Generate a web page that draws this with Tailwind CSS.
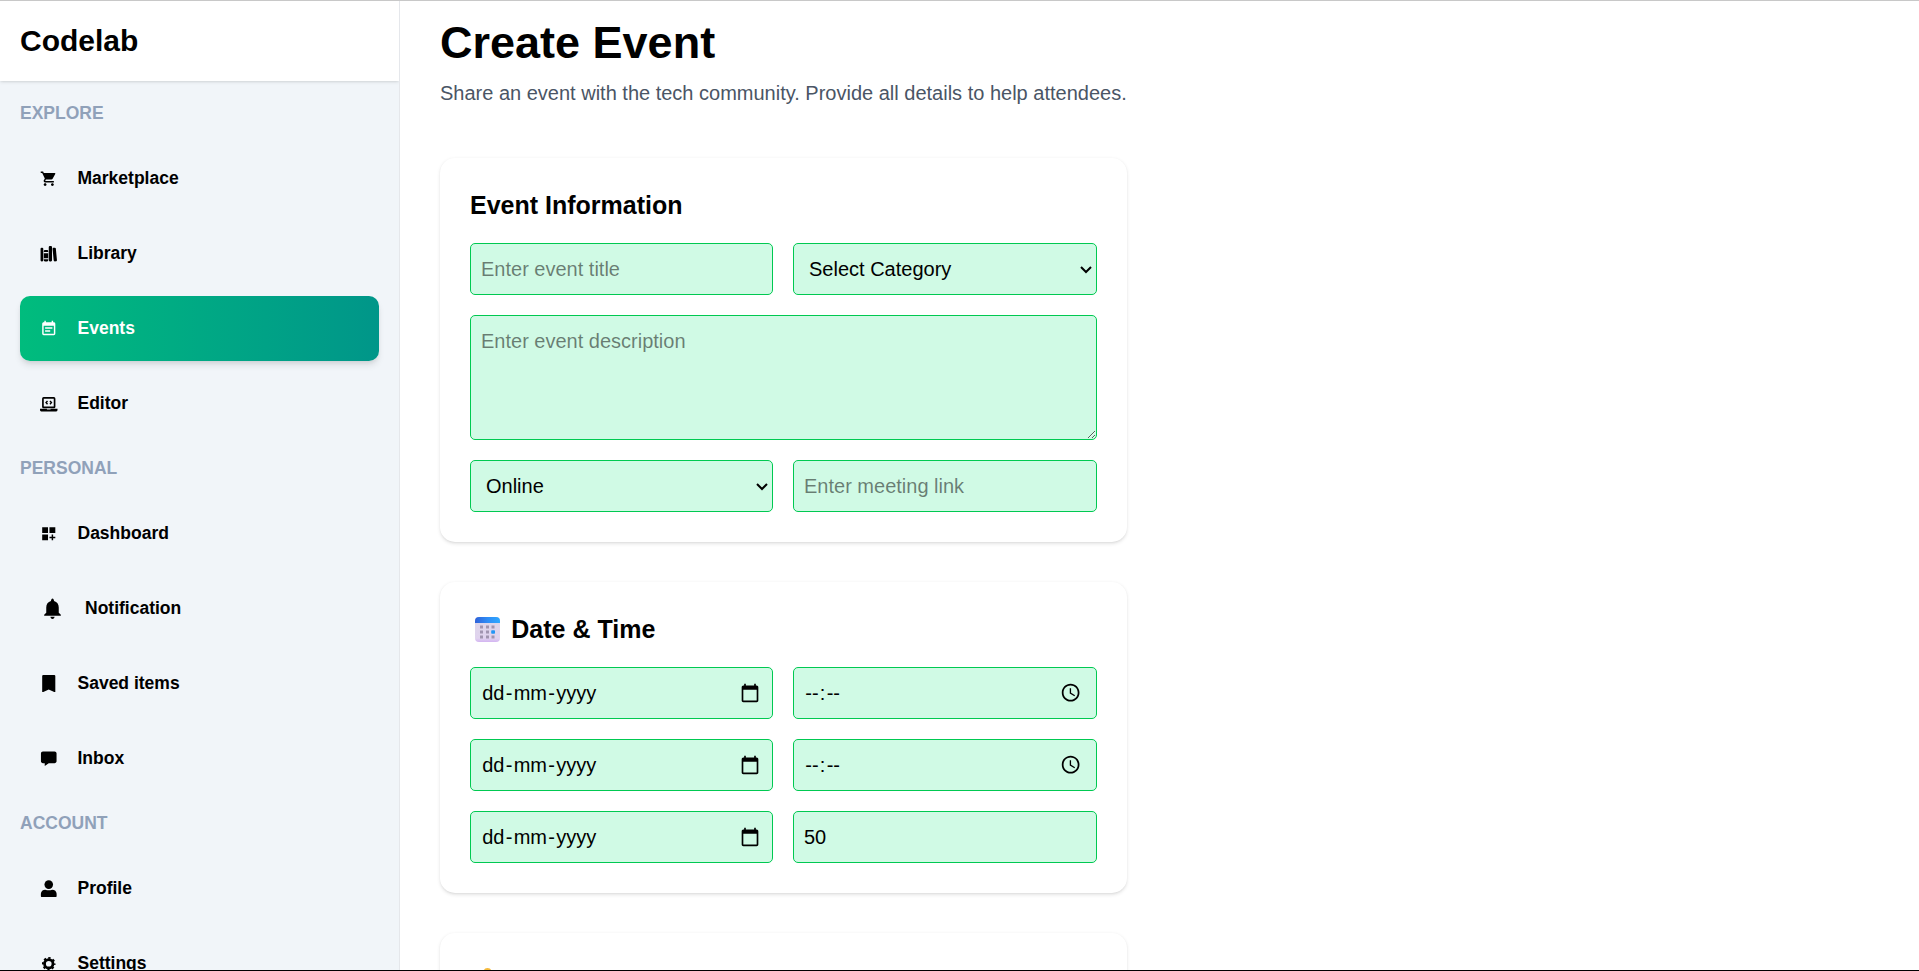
<!DOCTYPE html>
<html lang="en">
<head>
<meta charset="utf-8">
<title>Codelab - Create Event</title>
<script src="https://cdn.jsdelivr.net/npm/@tailwindcss/browser@4"></script>
</head>
<body class="h-screen flex flex-col overflow-hidden bg-white text-black border-t border-b border-t-[#c8c8c8] border-b-black font-['Liberation_Sans',Arial,sans-serif]">
<div class="flex flex-1 min-h-0 overflow-hidden [zoom:1.25]">

  <aside class="w-80 shrink-0 bg-slate-100 border-r border-gray-200 overflow-hidden">
    <div class="h-16 bg-white shadow-sm px-4 flex items-center">
      <div class="text-2xl font-bold">Codelab</div>
    </div>
    <nav class="p-4 flex flex-col gap-4 text-sm font-bold">
      <div class="text-slate-400">EXPLORE</div>
      <div class="flex flex-col gap-2">
        <a class="flex items-center gap-4 p-4 rounded-lg">
          <svg class="size-3.5" viewBox="0 0 24 24" fill="currentColor"><path d="M7 18c-1.1 0-1.99.9-1.99 2S5.9 22 7 22s2-.9 2-2-.9-2-2-2zM1 2v2h2l3.6 7.59-1.35 2.45c-.16.28-.25.61-.25.96 0 1.1.9 2 2 2h12v-2H7.42c-.14 0-.25-.11-.25-.25l.03-.12.9-1.63h7.45c.75 0 1.41-.41 1.75-1.03l3.58-6.49A1.003 1.003 0 0020 4H5.21l-.94-2H1zm16 16c-1.1 0-1.99.9-1.99 2s.89 2 1.99 2 2-.9 2-2-.9-2-2-2z"/></svg>
          Marketplace
        </a>
        <a class="flex items-center gap-4 p-4 rounded-lg">
          <svg class="size-3.5" viewBox="0 0 512 512" fill="currentColor"><path d="M64 480H48a32 32 0 01-32-32V112a32 32 0 0132-32h16a32 32 0 0132 32v336a32 32 0 01-32 32zM240 176a32 32 0 00-32-32h-64a32 32 0 00-32 32v28a4 4 0 004 4h120a4 4 0 004-4zM112 448a32 32 0 0032 32h64a32 32 0 0032-32v-30a2 2 0 00-2-2H114a2 2 0 00-2 2z"/><rect x="112" y="240" width="128" height="144" rx="2"/><path d="M320 480h-32a32 32 0 01-32-32V64a32 32 0 0132-32h32a32 32 0 0132 32v384a32 32 0 01-32 32zM495.89 445.45l-32.23-340c-1.48-15.65-16.94-27-34.53-25.31l-31.85 3c-17.59 1.67-30.65 15.71-29.17 31.36l32.23 340c1.48 15.65 16.94 27 34.53 25.31l31.85-3c17.59-1.67 30.65-15.71 29.17-31.36z"/></svg>
          Library
        </a>
        <a class="flex items-center gap-4 p-4 rounded-lg text-white bg-linear-to-r from-[#00bc7d] to-[#009689] shadow-md">
          <svg class="size-3.5" viewBox="0 0 24 24" fill="currentColor"><path d="M17 10H7v2h10v-2zm2-7h-1V1h-2v2H8V1H6v2H5c-1.11 0-1.99.9-1.99 2L3 19a2 2 0 0 0 2 2h14c1.1 0 2-.9 2-2V5c0-1.1-.9-2-2-2zm0 16H5V8h14v11zm-5-5H7v2h7v-2z"/></svg>
          Events
        </a>
        <a class="flex items-center gap-4 p-4 rounded-lg">
          <svg class="size-3.5" viewBox="0 0 24 24" fill="none" stroke="currentColor"><rect x="4" y="4" width="16" height="13" rx="1" stroke-width="2.3"/><path d="M10.3 8.2 8.3 10.4l2 2.2M13.7 8.2l2 2.2-2 2.2" stroke-width="1.9"/><path d="M0 18.8h9.5v1.2h5v-1.2H24v1.7q0 2-1.7 2H1.7Q0 22.5 0 20.5z" fill="currentColor" stroke="none"/></svg>
          Editor
        </a>
      </div>
      <div class="text-slate-400">PERSONAL</div>
      <div class="flex flex-col gap-2">
        <a class="flex items-center gap-4 p-4 rounded-lg">
          <svg class="size-3.5" viewBox="0 0 24 24" fill="currentColor"><path d="M3 3h8v8H3zm10 0h8v8h-8zM3 13h8v8H3zm15 0h-2v3h-3v2h3v3h2v-3h3v-2h-3z"/></svg>
          Dashboard
        </a>
        <a class="flex items-center gap-4 p-4 rounded-lg">
          <svg class="size-5" viewBox="0 0 24 24" fill="currentColor"><path d="M12 22c1.1 0 2-.9 2-2h-4c0 1.1.89 2 2 2zm6-6v-5c0-3.07-1.64-5.64-4.5-6.32C13.3 3.3 12.8 2.3 12 2.3s-1.3 1-1.5 2.38C7.63 5.36 6 7.92 6 11v5l-2 2v1h16v-1l-2-2z"/></svg>
          Notification
        </a>
        <a class="flex items-center gap-4 p-4 rounded-lg">
          <svg class="size-3.5" viewBox="0 0 16 16" fill="currentColor"><path d="M2 1v15l6-2.7L14 16V1a1 1 0 0 0-1-1H3a1 1 0 0 0-1 1"/></svg>
          Saved items
        </a>
        <a class="flex items-center gap-4 p-4 rounded-lg">
          <svg class="size-3.5" viewBox="0 0 24 24" fill="currentColor"><path d="M20 2H4C2.5 2 1.3 3.2 1.3 4.5v11C1.3 17 2.5 18 4 18h2.5v4l5.5-4h8c1.5 0 2.7-1 2.7-2.5v-11C22.7 3.2 21.5 2 20 2z"/></svg>
          Inbox
        </a>
      </div>
      <div class="text-slate-400">ACCOUNT</div>
      <div class="flex flex-col gap-2">
        <a class="flex items-center gap-4 p-4 rounded-lg">
          <svg class="size-3.5" viewBox="0 0 24 24" fill="currentColor"><circle cx="12" cy="6.3" r="5.9"/><path d="M1.2 19c0-3.5 2.8-5.7 6-5.7Q12 15 16.8 13.3c3.2 0 6 2.2 6 5.7v3q0 1.6-1.6 1.6H2.8Q1.2 23.6 1.2 22z"/></svg>
          Profile
        </a>
        <a class="flex items-center gap-4 p-4 rounded-lg">
          <svg class="size-3.5" viewBox="0 0 24 24" fill="none" stroke="currentColor"><circle cx="12" cy="12" r="5.8" stroke-width="3.8"/><circle cx="12" cy="12" r="8" stroke-width="2.6" stroke-dasharray="3.142 3.142" stroke-dashoffset="1.571"/></svg>
          Settings
        </a>
      </div>
    </nav>
  </aside>

  <main class="flex-1 pl-8 pt-[13.6px]">
    <div class="w-[549.6px]">
      <h1 class="text-4xl font-bold">Create Event</h1>
      <p class="mt-2 text-gray-600 whitespace-nowrap">Share an event with the tech community. Provide all details to help attendees.</p>

      <div class="mt-10 flex flex-col gap-8">
        <section class="bg-white rounded-xl shadow-sm p-6">
          <h2 class="text-xl font-bold mb-4">Event Information</h2>
          <div class="grid grid-cols-[242.4px_1fr] gap-4">
            <input class="w-full min-w-0 p-2 border border-green-500 rounded bg-emerald-100" placeholder="Enter event title">
            <select class="w-full p-2 border border-green-500 rounded bg-emerald-100"><option>Select Category</option></select>
            <textarea class="col-span-2 h-[99.8px] p-2 border border-green-500 rounded bg-emerald-100" placeholder="Enter event description"></textarea>
            <select class="w-full p-2 border border-green-500 rounded bg-emerald-100"><option>Online</option></select>
            <input class="w-full min-w-0 p-2 border border-green-500 rounded bg-emerald-100" placeholder="Enter meeting link">
          </div>
        </section>

        <section class="bg-white rounded-xl shadow-sm p-6">
          <h2 class="text-xl font-bold mb-4 flex items-center">
            <svg class="w-5 h-5 ml-[3.6px] mr-[9.4px]" viewBox="0 0 25 25">
              <defs>
                <linearGradient id="top"><stop offset="0" stop-color="#2f62d9"/><stop offset=".5" stop-color="#2f8cf5"/><stop offset="1" stop-color="#2fa8ff"/></linearGradient>
                <linearGradient id="page" x1="0" y1="0" x2="0" y2="1"><stop offset="0" stop-color="#dcd6e8"/><stop offset=".85" stop-color="#e0d3ee"/><stop offset="1" stop-color="#d3b4f2"/></linearGradient>
              </defs>
              <rect x="0" y="0" width="25" height="25" rx="4" fill="url(#page)"/>
              <path d="M0 6V4a4 4 0 0 1 4-4h17a4 4 0 0 1 4 4v2z" fill="url(#top)"/>
              <g fill="#a195b0"><path d="M5 8.5h3v3H5zM11 8.5h3v3h-3zM16.5 8.5h3v3h-3zM5 13.5h3v3H5zM11 13.5h3v3h-3zM5 18.5h3v3H5zM11 18.5h3v3h-3zM16.5 18.5h3v3h-3z"/></g>
              <rect x="16.2" y="13.2" width="3.8" height="3.6" rx=".8" fill="#2496f5"/>
            </svg>
            Date &amp; Time
          </h2>
          <div class="grid grid-cols-[242.4px_1fr] gap-4">
            <div class="flex items-center justify-between p-2 pr-2.5 border border-green-500 rounded bg-emerald-100"><span class="flex"><span class="px-px">dd</span>-<span class="px-px">mm</span>-<span class="px-px">yyyy</span></span><svg class="size-4" viewBox="0 0 24 24"><path d="M20 3h-1V1h-2v2H7V1H5v2H4c-1.1 0-2 .9-2 2v16c0 1.1.9 2 2 2h16c1.1 0 2-.9 2-2V5c0-1.1-.9-2-2-2zm0 18H4V8h16v13z"/></svg></div>
            <div class="flex items-center justify-between p-2 pr-[11.5px] border border-green-500 rounded bg-emerald-100"><span class="flex"><span class="px-px">--</span>:<span class="px-px">--</span></span><svg class="size-[17px]" viewBox="0 0 24 24"><path d="M11.99 2C6.47 2 2 6.48 2 12s4.47 10 9.99 10C17.52 22 22 17.52 22 12S17.52 2 11.99 2zM12 20c-4.42 0-8-3.58-8-8s3.58-8 8-8 8 3.58 8 8-3.58 8-8 8z"/><path d="M12.5 7H11v6l5.25 3.15.75-1.23-4.5-2.67z"/></svg></div>
            <div class="flex items-center justify-between p-2 pr-2.5 border border-green-500 rounded bg-emerald-100"><span class="flex"><span class="px-px">dd</span>-<span class="px-px">mm</span>-<span class="px-px">yyyy</span></span><svg class="size-4" viewBox="0 0 24 24"><path d="M20 3h-1V1h-2v2H7V1H5v2H4c-1.1 0-2 .9-2 2v16c0 1.1.9 2 2 2h16c1.1 0 2-.9 2-2V5c0-1.1-.9-2-2-2zm0 18H4V8h16v13z"/></svg></div>
            <div class="flex items-center justify-between p-2 pr-[11.5px] border border-green-500 rounded bg-emerald-100"><span class="flex"><span class="px-px">--</span>:<span class="px-px">--</span></span><svg class="size-[17px]" viewBox="0 0 24 24"><path d="M11.99 2C6.47 2 2 6.48 2 12s4.47 10 9.99 10C17.52 22 22 17.52 22 12S17.52 2 11.99 2zM12 20c-4.42 0-8-3.58-8-8s3.58-8 8-8 8 3.58 8 8-3.58 8-8 8z"/><path d="M12.5 7H11v6l5.25 3.15.75-1.23-4.5-2.67z"/></svg></div>
            <div class="flex items-center justify-between p-2 pr-2.5 border border-green-500 rounded bg-emerald-100"><span class="flex"><span class="px-px">dd</span>-<span class="px-px">mm</span>-<span class="px-px">yyyy</span></span><svg class="size-4" viewBox="0 0 24 24"><path d="M20 3h-1V1h-2v2H7V1H5v2H4c-1.1 0-2 .9-2 2v16c0 1.1.9 2 2 2h16c1.1 0 2-.9 2-2V5c0-1.1-.9-2-2-2zm0 18H4V8h16v13z"/></svg></div>
            <input class="w-full min-w-0 p-2 border border-green-500 rounded bg-emerald-100" value="50">
          </div>
        </section>

        <section class="bg-white rounded-xl shadow-sm p-6">
          <h2 class="text-xl font-bold mb-4 pt-[4px] flex items-center">
            <svg class="w-5 h-5 ml-[3.6px]" viewBox="0 0 25 25"><circle cx="12.5" cy="4" r="4" fill="#f5b93a"/><circle cx="12.5" cy="15" r="9.5" fill="#f9c23c"/></svg>
          </h2>
          <div class="h-40"></div>
        </section>
      </div>
    </div>
  </main>
</div>
</body>
</html>
